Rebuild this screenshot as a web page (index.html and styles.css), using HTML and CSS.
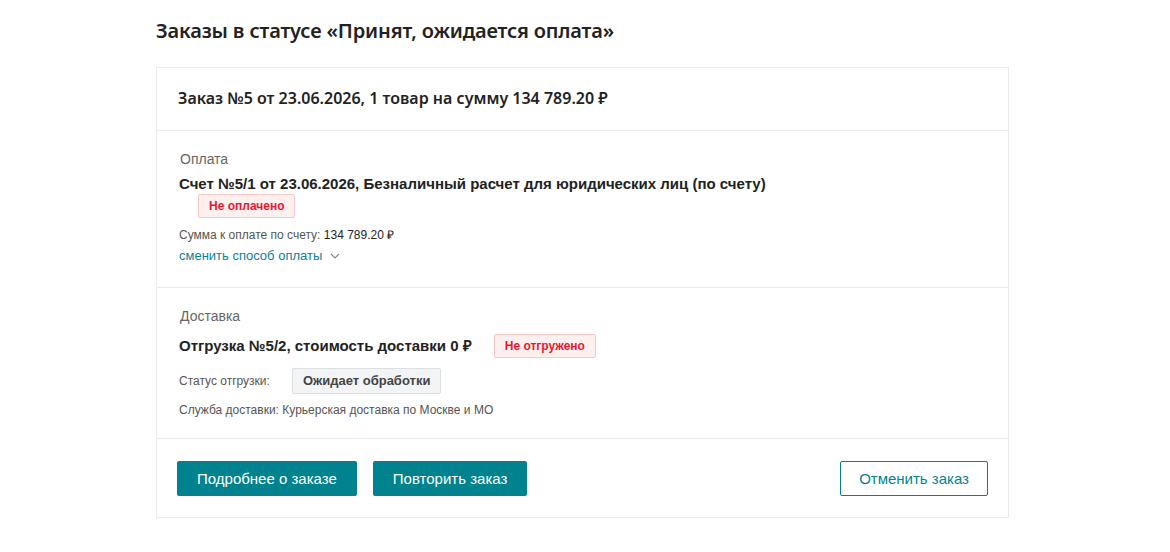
FILE: index.html
```html
<!DOCTYPE html>
<html lang="ru">
<head>
    <meta charset="UTF-8">
    <title>Заказы</title>
    <link rel="stylesheet" href="styles.css">
</head>
<body>

    <div class="page">
        <h1 class="page-title">Заказы в статусе «Принят, ожидается оплата»</h1>

        <!-- Order card -->
        <div class="order-card">
            <div class="order-head">
                Заказ №5 от 23.06.2026, 1 товар на сумму 134 789.20 ₽
            </div>

            <!-- Payment -->
            <div class="order-section payment">
                <div class="section-label">Оплата</div>
                <div class="section-title">Счет №5/1 от 23.06.2026, Безналичный расчет для юридических лиц (по счету)</div>
                <div class="pay-status">
                    <span class="badge badge-red">Не оплачено</span>
                </div>
                <div class="small-line">Сумма к оплате по счету: <span class="dark">134 789.20 ₽</span></div>
                <a href="#" class="change-link">сменить способ оплаты
                    <svg width="10" height="6" viewBox="0 0 10 6"><path d="M1 1l4 4 4-4" fill="none" stroke="#7a8a90" stroke-width="1.2"/></svg>
                </a>
            </div>

            <!-- Delivery -->
            <div class="order-section delivery">
                <div class="section-label">Доставка</div>
                <div class="ship-row">
                    <div class="section-title">Отгрузка №5/2, стоимость доставки 0 ₽</div>
                    <span class="badge badge-red">Не отгружено</span>
                </div>
                <div class="ship-status">
                    <span class="small-line">Статус отгрузки:</span>
                    <span class="badge badge-grey">Ожидает обработки</span>
                </div>
                <div class="small-line service">Служба доставки: Курьерская доставка по Москве и МО</div>
            </div>

            <!-- Actions -->
            <div class="order-actions">
                <a href="#" class="btn btn-fill">Подробнее о заказе</a>
                <a href="#" class="btn btn-fill">Повторить заказ</a>
                <a href="#" class="btn btn-outline">Отменить заказ</a>
            </div>
        </div>
    </div>

</body>
</html>
```

FILE: styles.css
```css
body {
    margin: 0;
    padding: 0;
    background: #fff;
    color: #333;
    font-family: "Liberation Sans", Arial, sans-serif;
}

.page {
    width: 853px;
    margin: 0 0 0 156px;
    padding: 18px 0 0 0;
}

.page-title {
    font-family: "Noto Sans", sans-serif;
    font-weight: 600;
    font-size: 20px;
    letter-spacing: -0.15px;
    color: #222;
    margin: 0 0 23px 0;
    line-height: 26px;
}

.order-card {
    border: 1px solid #ebebeb;
}

.order-head {
    font-family: "Noto Sans", sans-serif;
    font-weight: 600;
    font-size: 16px;
    color: #222;
    padding: 19px 21px 21px 21px;
    line-height: 22px;
    border-bottom: 1px solid #ebebeb;
}

.order-section {
    padding: 19px 22px 20px 22px;
    border-bottom: 1px solid #ebebeb;
}

.section-label {
    font-size: 14px;
    color: #666;
    margin-left: 1px;
    line-height: 18px;
    margin-bottom: 7px;
}

.section-title {
    font-size: 15px;
    font-weight: bold;
    color: #222;
    line-height: 18px;
}

.payment {
    padding-bottom: 23px;
}

.payment .small-line {
    margin-top: 9px;
}

.pay-status {
    padding: 1px 0 0 19px;
}

.badge {
    display: inline-block;
    font-size: 12px;
    font-weight: bold;
    border-radius: 2px;
    line-height: 22px;
}

.badge-red {
    color: #f0142d;
    background: #fff0f0;
    border: 1px solid #ffc4c4;
    padding: 0 10px;
}

.badge-grey {
    color: #444;
    background: #f3f4f5;
    border: 1px solid #dcdee0;
    font-size: 13px;
    line-height: 24px;
    padding: 0 10px;
}

.small-line {
    font-size: 12px;
    color: #555;
    line-height: 16px;
    margin-top: 7px;
}

.dark {
    color: #222;
}

.change-link {
    display: inline-flex;
    align-items: center;
    gap: 8px;
    margin-top: 5px;
    font-size: 13px;
    color: #0a8196;
    text-decoration: none;
    line-height: 16px;
}

.delivery {
    padding-top: 19px;
    padding-bottom: 20px;
}

.delivery .section-label {
    margin-bottom: 9px;
}

.ship-row {
    display: flex;
    align-items: center;
    gap: 22px;
}

.ship-status {
    display: flex;
    align-items: center;
    gap: 22px;
    margin-top: 10px;
}

.ship-status .small-line {
    margin-top: 0;
}

.delivery .service {
    margin-top: 8px;
}

.order-actions {
    display: flex;
    gap: 16px;
    padding: 22px 20px 21px 20px;
}

.btn {
    display: inline-block;
    font-family: "Liberation Sans Narrow", "Liberation Sans", sans-serif;
    font-size: 15px;
    height: 35px;
    line-height: 35px;
    padding: 0 20px;
    border-radius: 2px;
    text-decoration: none;
    box-sizing: border-box;
}

.btn-fill {
    background: #00838f;
    color: #fff;
}

.btn-outline {
    margin-left: auto;
    border: 1px solid #00838f;
    color: #00838f;
    line-height: 33px;
    padding: 0 18px;
}
```
